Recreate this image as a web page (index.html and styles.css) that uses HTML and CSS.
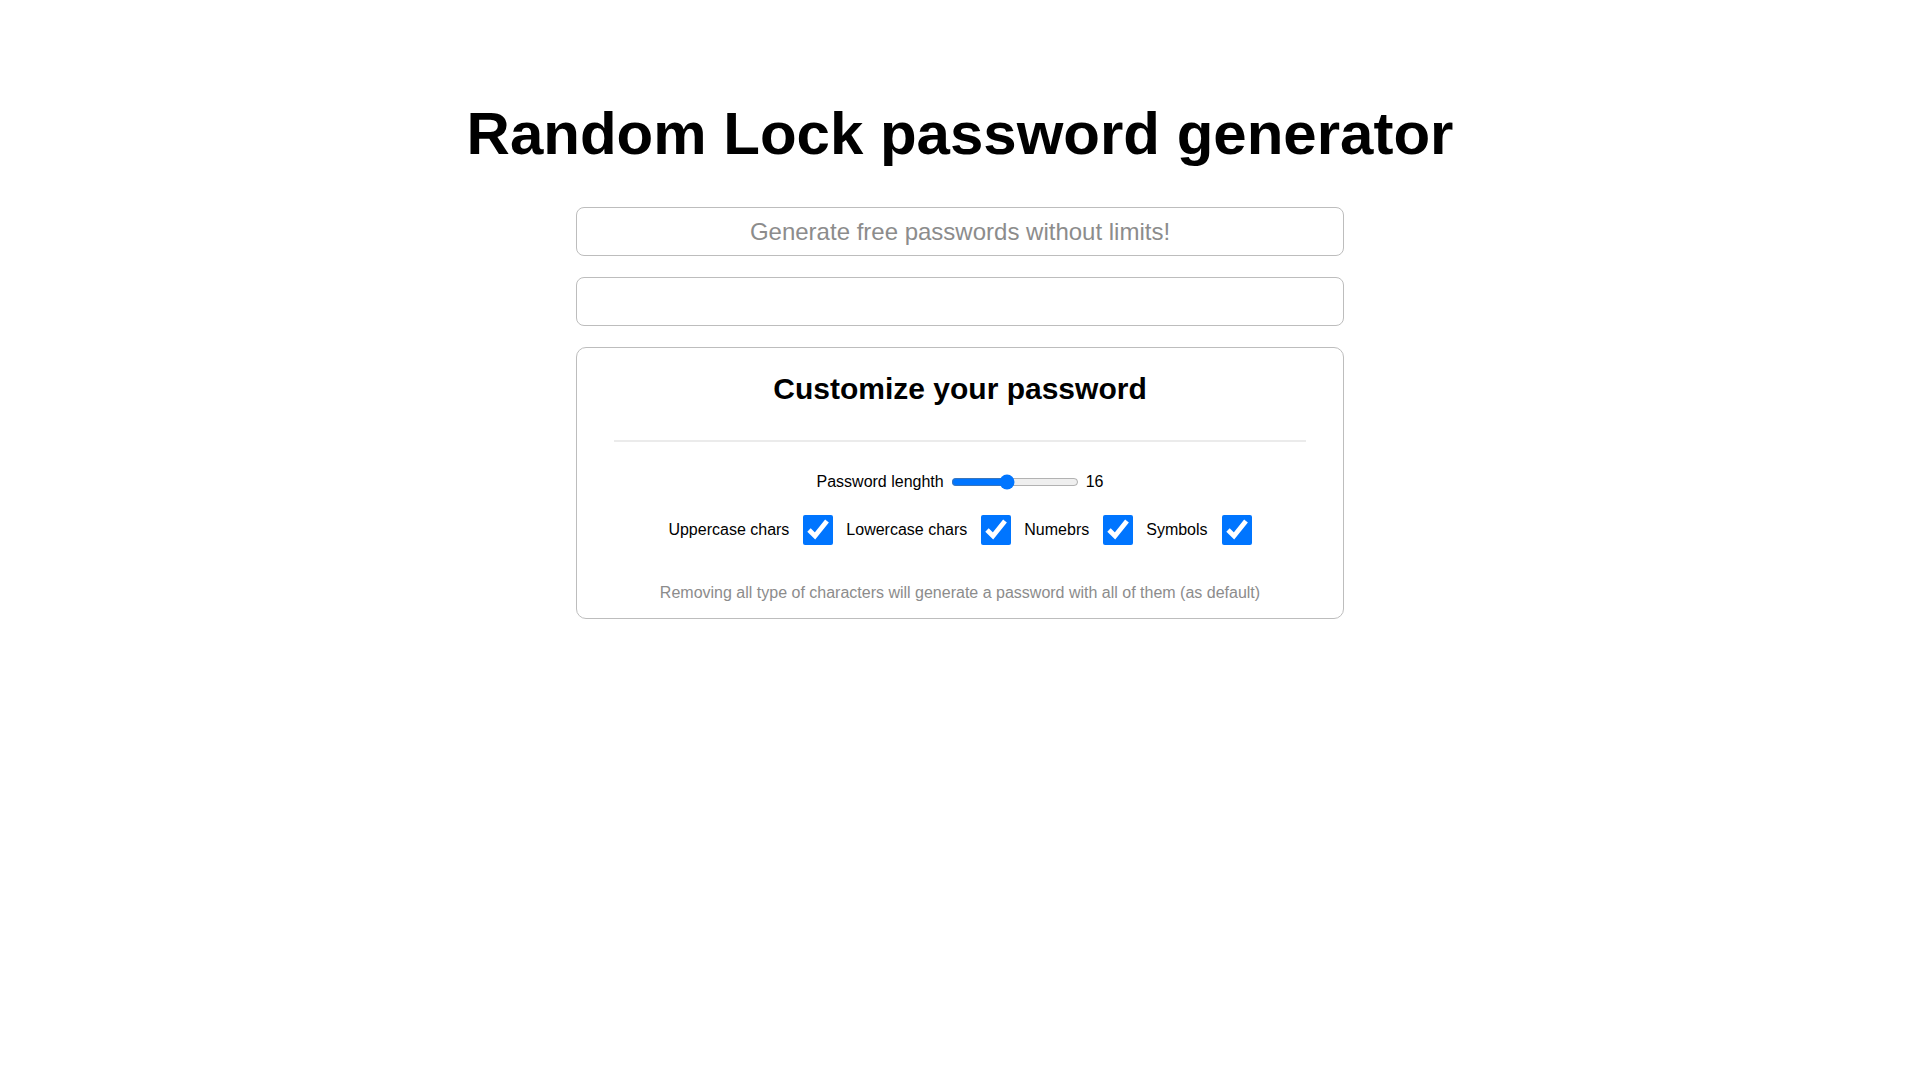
FILE: index.html
```html
<!DOCTYPE html>
<html lang="en">
<head>
<meta charset="utf-8">
<title>Random Lock password generator</title>
<link rel="stylesheet" href="styles.css">
</head>
<body>
<main class="page">
  <h1 class="title">Random Lock password generator</h1>
  <input class="field" type="text" placeholder="Generate free passwords without limits!" readonly>
  <input class="field" type="text" readonly>
  <section class="card">
    <h2 class="card-title">Customize your password</h2>
    <div class="divider"></div>
    <div class="length-row">
      <label for="len">Password lenghth</label>
      <input id="len" class="slider" type="range" min="4" max="32" value="16">
      <span class="len-value">16</span>
    </div>
    <div class="check-row">
      <label class="check-label" for="up">Uppercase chars</label>
      <input id="up" class="check" type="checkbox" checked>
      <label class="check-label" for="low">Lowercase chars</label>
      <input id="low" class="check" type="checkbox" checked>
      <label class="check-label" for="num">Numebrs</label>
      <input id="num" class="check" type="checkbox" checked>
      <label class="check-label" for="sym">Symbols</label>
      <input id="sym" class="check" type="checkbox" checked>
    </div>
    <p class="note">Removing all type of characters will generate a password with all of them (as default)</p>
  </section>
</main>
</body>
</html>
```

FILE: styles.css
```css
html, body {
  margin: 0;
  padding: 0;
  background: #ffffff;
}

body {
  font-family: "Liberation Sans", Arial, sans-serif;
  color: #000000;
}

.page {
  width: 768px;
  margin: 0 auto;
  padding-top: 99px;
  display: flex;
  flex-direction: column;
  align-items: stretch;
}

.title {
  font-size: 60px;
  font-weight: bold;
  line-height: 69px;
  margin: 0 -200px 39px;
  text-align: center;
  white-space: nowrap;
}

.field {
  box-sizing: border-box;
  width: 100%;
  height: 49px;
  margin: 0 0 21px;
  padding: 10px;
  border: 1px solid #bdbdbd;
  border-radius: 8px;
  font-family: "Liberation Sans", Arial, sans-serif;
  font-size: 24px;
  text-align: center;
  color: #000000;
  background: #ffffff;
  outline: none;
}

.field::placeholder {
  color: #8c8c8c;
  opacity: 1;
}

.card {
  box-sizing: border-box;
  width: 100%;
  height: 272px;
  padding: 0 37px;
  border: 1px solid #bdbdbd;
  border-radius: 10px;
  display: flex;
  flex-direction: column;
  align-items: stretch;
}

.card-title {
  margin: 24px 0 0;
  font-size: 30px;
  font-weight: bold;
  line-height: 34px;
  text-align: center;
}

.divider {
  height: 2px;
  margin-top: 34px;
  background: #ebebeb;
}

.length-row {
  margin-top: 30px;
  height: 20px;
  display: flex;
  align-items: center;
  justify-content: center;
  gap: 5px;
  font-size: 16px;
}

.slider {
  width: 128px;
  margin: 0 2px;
}

.check-row {
  margin-top: 23px;
  display: flex;
  align-items: center;
  justify-content: center;
  gap: 13px;
  font-size: 16px;
}

.check-label {
  margin-right: 1px;
}

.check {
  width: 30px;
  height: 30px;
  margin: 0;
}

.note {
  margin: 39px 0 0;
  font-size: 16px;
  line-height: 18px;
  text-align: center;
  color: #8c8c8c;
}
```
